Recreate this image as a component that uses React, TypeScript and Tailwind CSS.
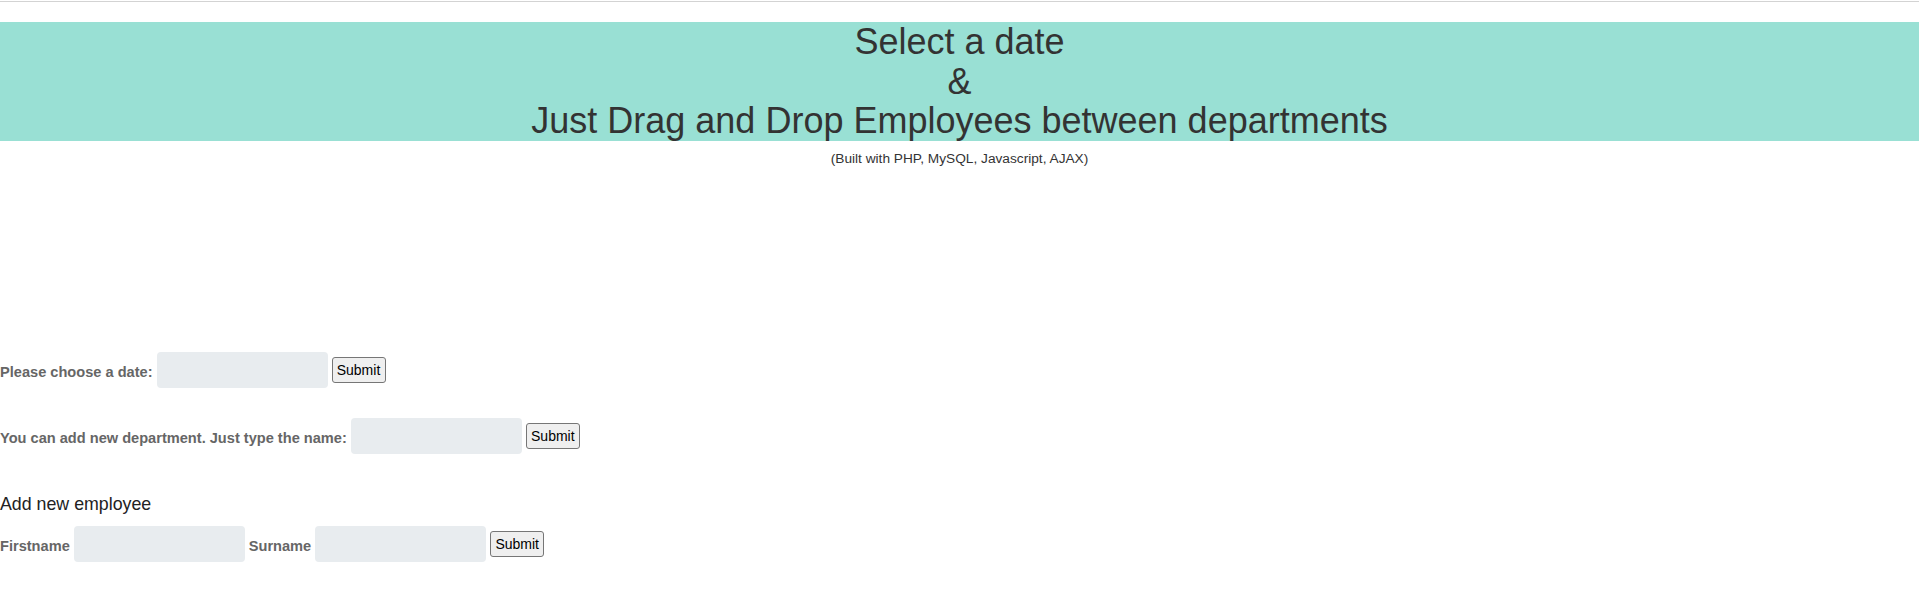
export default function App() {
  const label = "pt-[5px] text-[14.6px] font-bold text-[#666]";
  const input = "h-[36px] w-[171px] rounded-[4px] bg-[#e8ecef] outline-none";
  const button =
    "h-[26px] w-[54px] rounded-[3px] border border-[#767676] bg-[#efefef] text-[14px] text-black";

  return (
    <div className="min-h-screen bg-white font-['Liberation_Sans',Arial,sans-serif]">
      <div className="mt-px h-px bg-[#d3d3d3]" />

      <header className="mt-[20px] h-[119px] bg-[#99e0d4] text-center text-[36px] leading-[39.67px] text-[#333]">
        <div>Select a date</div>
        <div>&amp;</div>
        <div>Just Drag and Drop Employees between departments</div>
      </header>

      <p className="mt-[10px] text-center text-[13.7px] leading-[16px] text-[#333]">
        (Built with PHP, MySQL, Javascript, AJAX)
      </p>

      <div className="mt-[185px] flex items-center gap-[4px]">
        <span className={label}>Please choose a date:</span>
        <input type="text" className={input} />
        <button className={button}>Submit</button>
      </div>

      <div className="mt-[30px] flex items-center gap-[4px]">
        <span className={label}>You can add new department. Just type the name:</span>
        <input type="text" className={input} />
        <button className={button}>Submit</button>
      </div>

      <h3 className="mt-[40px] text-[17.8px] leading-[21px] text-[#222]">Add new employee</h3>

      <div className="mt-[11px] flex items-center gap-[4px]">
        <span className={label}>Firstname</span>
        <input type="text" className={input} />
        <span className={label}>Surname</span>
        <input type="text" className={input} />
        <button className={button}>Submit</button>
      </div>
    </div>
  );
}
